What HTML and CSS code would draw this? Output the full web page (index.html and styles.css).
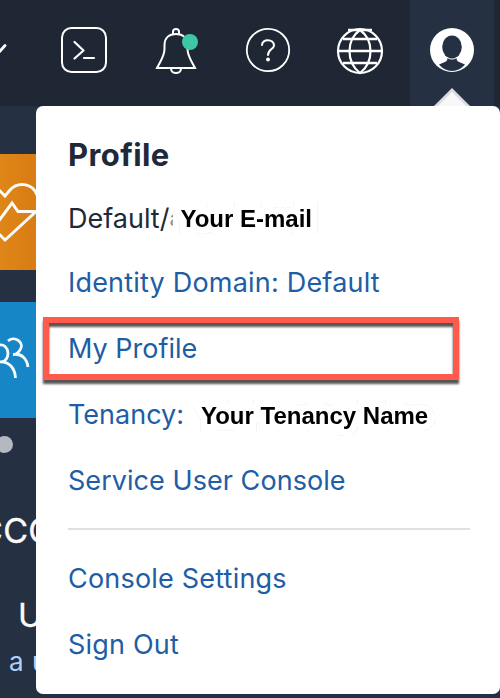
FILE: index.html
```html
<!DOCTYPE html>
<html lang="en">
<head>
<meta charset="utf-8">
<title>Profile menu</title>
<link rel="stylesheet" href="styles.css">
</head>
<body>
<header class="topbar">
  <svg class="icons" width="410" height="106" viewBox="0 0 410 106" fill="none" stroke="#fff" stroke-width="2" aria-hidden="true">
    <path d="M-4 48L0 51L5 45.500" stroke-linecap="round" stroke-width="2.800"/>
    <rect x="62" y="28" width="44" height="44" rx="9.500"/>
    <path d="M74.500 42L83.500 50.500L74.500 58.500M84 58H94" stroke-linecap="round" stroke-linejoin="round" stroke-width="2.200"/>
    <path d="M157 68C161 60 164.500 56 164.500 49V45C164.500 38 169 34 176 34S187.500 38 187.500 45V49C187.500 56 191 60 195 68Z"/>
    <path d="M173 34V32a3 3 0 0 1 6 0V34M171 68.500c0 6 10 6 10 0"/>
    <circle cx="190" cy="42" r="8" fill="#3cc8a7" stroke="none"/>
    <circle cx="268" cy="50" r="21.200" stroke-width="1.800"/>
    <path d="M262 45C262 38.500 274 38.500 274 45.500C274 49 268 49.500 268 55" stroke-linecap="round"/>
    <circle cx="268" cy="59.500" r="1.900" fill="#fff" stroke="none"/>
    <circle cx="360" cy="51" r="22" stroke-width="2.200"/>
    <path d="M360 30C346 40 346 62 360 73C374 62 374 40 360 30Z" stroke-width="2.200"/>
    <path d="M348 30H372M343 39H377M338 51H382M343 63H377" stroke-width="2.400"/>
  </svg>
  <div class="account">
    <svg width="84" height="106" viewBox="410 0 84 106" aria-hidden="true">
      <circle cx="452" cy="50" r="22" fill="#fff"/>
      <path d="M439 64.500L446 61.500Q447.500 60.500 447.500 58H456.500Q456.500 60.500 458 61.500L465 64.500Q460 71 452 71T439 64.500Z" fill="#253142"/>
      <ellipse cx="452" cy="47" rx="9.800" ry="11.500" fill="#253142"/>
      <path d="M446.500 57.200Q452 61 457.500 57.200" fill="none" stroke="#fff" stroke-width="1"/>
      <path d="M434 106L452 88L470 106Z" fill="#dcdde2"/>
      <path d="M438 106L452 92L466 106Z" fill="#f8f8f8"/>
    </svg>
  </div>
</header>
<main class="content">
  <aside class="behind">
    <div class="tile orange">
      <svg width="36" height="116" viewBox="0 154 36 116" fill="none" stroke="#fafafa" stroke-width="3" aria-hidden="true">
        <path d="M-2 189L5 196L10 190C17 182 32 182 37 195M-2 222L12 203L18 211.500H36M36 211.500L5 240L-2 233"/>
      </svg>
    </div>
    <div class="tile blue">
      <svg width="36" height="116" viewBox="0 302 36 116" fill="none" stroke="#f6fafc" stroke-width="2.800" aria-hidden="true">
        <path d="M-1 345C10 343 11 361 1 362M-1 362C10 361 15 369 15.500 378M8 341C15 335 25 343 20 350C18 353 16 354.500 13 354.500M13 354.500C22 353 27 359 28 367"/>
      </svg>
    </div>
    <span class="dot"></span>
    <div class="word caps">CCO</div>
    <div class="word title">U</div>
    <div class="word sub">a u</div>
  </aside>
  <section class="panel">
    <h1>Profile</h1>
    <p class="row user">Default/<span class="clip">a</span><span class="label email">Your E-mail</span></p>
    <a class="row domain">Identity Domain: Default</a>
    <a class="row profile">My Profile<span class="highlight"></span></a>
    <a class="row tenancy">Tenancy:<span class="label name">Your Tenancy Name</span></a>
    <a class="row service">Service User Console</a>
    <hr>
    <a class="row">Console Settings</a>
    <a class="row">Sign Out</a>
  </section>
</main>
</body>
</html>
```
FILE: styles.css
```css
* { box-sizing: border-box; }
body {
  margin: 0;
  height: 698px;
  overflow: hidden;
  background: #253142;
  font-family: Inter, "Liberation Sans", sans-serif;
}
.topbar {
  display: flex;
  height: 106px;
  background: #202734;
}
.icons, .account svg, .tile svg { display: block; }
.account { width: 84px; background: #253142; }
.content {
  display: grid;
  grid-template-columns: 36px 464px;
  height: 592px;
}
.behind {
  height: 592px;
  padding-top: 48px;
  overflow: hidden;
  color: #fafafa;
}
.tile { height: 116px; margin-bottom: 32px; }
.orange { background: linear-gradient(90deg, #df8618, #d87c13); }
.blue { background: #1786c6; margin-bottom: 18px; }
.dot {
  display: block;
  width: 17px;
  height: 17px;
  margin-left: -4px;
  border-radius: 50%;
  background: #b4b9c1;
}
.word { white-space: nowrap; }
.caps {
  height: 68px;
  margin: 44px 0 0 -22px;
  font-size: 34px;
  line-height: 68px;
  letter-spacing: 0.3px;
  -webkit-text-stroke: 0.4px #fafafa;
}
.title {
  height: 72px;
  margin: 14px 0 0 18px;
  font-size: 33px;
  line-height: 72px;
  -webkit-text-stroke: 0.3px #fafafa;
}
.sub {
  height: 40px;
  margin: -9px 0 0 9px;
  font-size: 26px;
  line-height: 40px;
  letter-spacing: 0.5px;
  color: #afd1fa;
}
.panel {
  height: 588px;
  padding: 17px 30px 17px 32px;
  border-radius: 7px;
  background: #fff;
}
h1 {
  margin: 0 0 1px;
  font-size: 31px;
  font-weight: 700;
  letter-spacing: 0.4px;
  line-height: 63px;
  color: #202938;
}
.row {
  display: flex;
  align-items: center;
  position: relative;
  height: 66px;
  margin: 0;
  font-size: 27px;
  letter-spacing: 0.2px;
  white-space: nowrap;
  color: #205da5;
}
.user { height: 62px; letter-spacing: 0; color: #202938; }
.profile, .tenancy { letter-spacing: 0; }
.service { letter-spacing: 0.05px; }
.clip {
  width: 4px;
  overflow: hidden;
  font-size: 22px;
  color: #8a8f98;
}
.label {
  padding-top: 3px;
  font: bold 24px "Liberation Sans", sans-serif;
  letter-spacing: 0;
  color: #000;
  -webkit-text-stroke: 14px #fff;
  paint-order: stroke fill;
  stroke-linejoin: round;
  filter: drop-shadow(0 0 0.5px #ccc);
}
.email { padding-top: 1px; margin-left: 7px; }
.name { margin-left: 17px; }
.highlight {
  position: absolute;
  left: -25px;
  top: 2px;
  width: 416px;
  height: 63px;
  border: 6px solid #ff5a4c;
  filter: drop-shadow(0 4px 1.2px #555);
}
hr {
  height: 2px;
  margin: 15px 0;
  border: 0;
  background: #dfdfe4;
}
```
